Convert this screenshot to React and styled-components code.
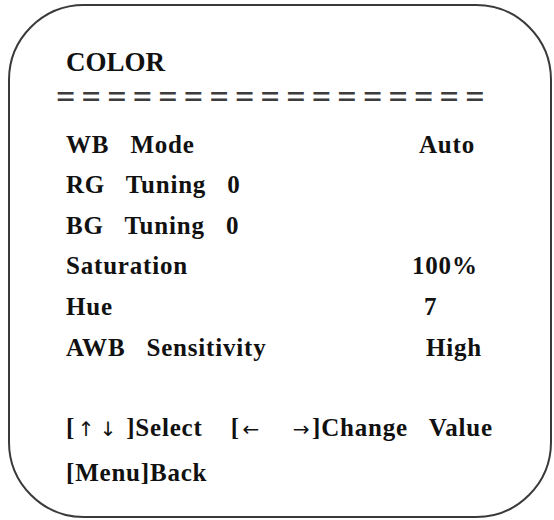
import styled, { createGlobalStyle } from "styled-components";

const GlobalStyle = createGlobalStyle`
  html, body {
    margin: 0;
    padding: 0;
    background: #ffffff;
  }
  body {
    font-family: "Liberation Serif", "Times New Roman", serif;
    color: #111111;
  }
`;

const Screen = styled.div`
  width: 554px;
  height: 520px;
  padding: 4px 2px 2px 8px;
  box-sizing: border-box;
`;

const Frame = styled.div`
  width: 544px;
  height: 514px;
  box-sizing: border-box;
  border: 2px solid #3a3a3a;
  border-radius: 76px;
  padding: 41px 0 0 56px;
  display: flex;
  flex-direction: column;
`;

const Title = styled.div`
  font-size: 27px;
  font-weight: 700;
  line-height: 30px;
`;

const Rule = styled.div`
  font-size: 34px;
  font-weight: 700;
  line-height: 39px;
  letter-spacing: 6.2px;
  color: #3c3c3c;
  margin-left: -10px;
  margin-bottom: 8.6px;
  white-space: nowrap;
`;

const List = styled.div`
  display: flex;
  flex-direction: column;
`;

const Row = styled.div`
  display: grid;
  grid-template-columns: 346px 1fr;
  height: 40.6px;
  font-size: 25px;
  font-weight: 700;
  line-height: 40px;
  letter-spacing: 0.8px;
  white-space: pre;
`;

const Value = styled.span`
  padding-left: ${({ indent }) => indent || 0}px;
`;

const Help = styled.div`
  margin-top: 38px;
  font-size: 25px;
  font-weight: 700;
  line-height: 44px;
  letter-spacing: 0.8px;
  white-space: pre;
`;

const Arrow = styled.span`
  display: inline-block;
  font-family: "DejaVu Sans", sans-serif;
  font-weight: 400;
  font-size: 20px;
  letter-spacing: 0;
  color: #111111;
  width: ${({ w }) => w || 20}px;
  text-align: center;
`;

const settings = [
  { label: "WB   Mode", value: "Auto", indent: 7 },
  { label: "RG   Tuning   0", value: "" },
  { label: "BG   Tuning   0", value: "" },
  { label: "Saturation", value: "100%", indent: 0 },
  { label: "Hue", value: "7", indent: 12 },
  { label: "AWB   Sensitivity", value: "High", indent: 14 },
];

export default function App() {
  return (
    <>
      <GlobalStyle />
      <Screen>
        <Frame>
          <Title>COLOR</Title>
          <Rule>=================</Rule>
          <List>
            {settings.map((s) => (
              <Row key={s.label}>
                <span>{s.label}</span>
                <Value indent={s.indent}>{s.value}</Value>
              </Row>
            ))}
          </List>
          <Help>
            <div>
              [<Arrow w={22}>↑</Arrow><Arrow w={22}>↓</Arrow> ]Select    [<Arrow w={22}>←</Arrow>    <Arrow w={22}>→</Arrow>]Change   Value
            </div>
            <div>[Menu]Back</div>
          </Help>
        </Frame>
      </Screen>
    </>
  );
}
